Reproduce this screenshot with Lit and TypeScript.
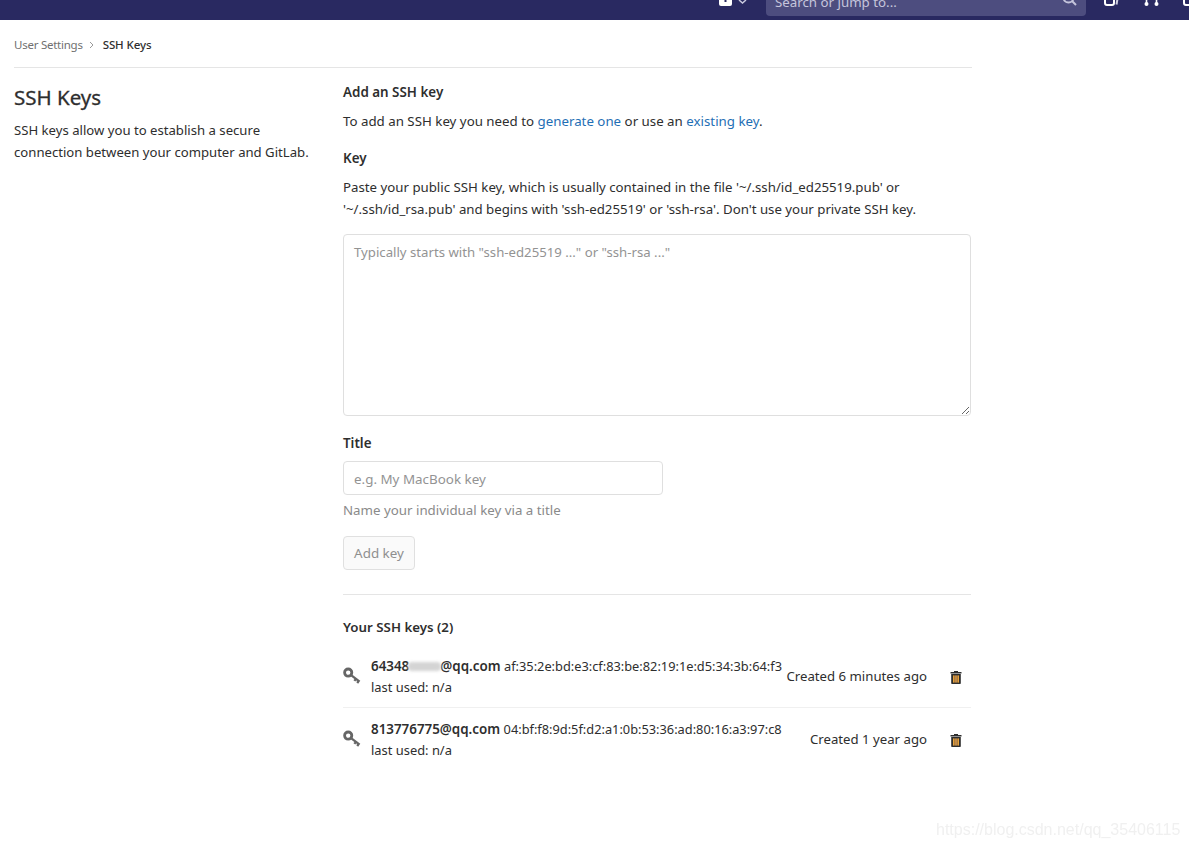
import { LitElement, html, css } from "lit";
import { customElement } from "lit/decorators.js";

const keyIcon = html`<svg class="key" width="18" height="18" viewBox="0 0 18 18" fill="none">
  <circle cx="5.2" cy="5.6" r="3.6" stroke="#666" stroke-width="2.8"/>
  <path d="M8.4 8.4 L16.6 14.6 M12.8 11.8 L11.4 13.8 M15.6 14 L14.2 16" stroke="#666" stroke-width="2.3"/>
</svg>`;

const trashIcon = html`<svg class="trash" width="12" height="13" viewBox="0 0 12 13">
  <path d="M4 1 V0 H8 V1 H11.5 V2.6 H0.5 V1 Z" fill="#2e2e2e"/>
  <path d="M1.2 3 H10.8 V12.2 Q10.8 13 10 13 H2 Q1.2 13 1.2 12.2 Z" fill="#2e2e2e"/>
  <rect x="3" y="4.4" width="1.7" height="7.2" fill="#e9a23b"/>
  <rect x="5.15" y="4.4" width="1.7" height="7.2" fill="#d99a50"/>
  <rect x="7.3" y="4.4" width="1.7" height="7.2" fill="#e9a23b"/>
</svg>`;

@customElement("app-root")
export class AppRoot extends LitElement {
  static styles = css`
    :host {
      display: block;
      width: 1189px;
      height: 848px;
      overflow: hidden;
      position: relative;
      background: #fff;
      font-family: "Noto Sans", "Open Sans", sans-serif;
      font-size: 13.3px;
      line-height: 21px;
      color: #2e2e2e;
    }
    * { box-sizing: border-box; }
    .topbar {
      height: 20px;
      background: #292961;
      position: relative;
      overflow: hidden;
    }
    .plus { position: absolute; left: 718px; top: -9px; }
    .search {
      position: absolute;
      left: 766px;
      top: -16px;
      width: 320px;
      height: 32px;
      border-radius: 4px;
      background: #4d4d7f;
      color: #c5c5dc;
      font-size: 13.3px;
      line-height: 32px;
      padding-left: 9px;
      padding-top: 2px;
    }
    .searchicon { position: absolute; left: 1062px; top: -9px; }
    .ic1 { position: absolute; left: 1104px; top: -9px; }
    .ic2 { position: absolute; left: 1144px; top: -9px; }
    .ic3 { position: absolute; left: 1183px; top: -9px; }

    .page { width: 958px; margin-left: 14px; }
    .crumbs {
      height: 48px;
      border-bottom: 1px solid #e5e5e5;
      display: flex;
      align-items: center;
      padding-top: 2px;
      font-size: 11.5px;
      letter-spacing: -0.25px;
      color: #707070;
    }
    .crumbs .cur { color: #2e2e2e; font-weight: 500; letter-spacing: -0.1px; }
    .crumbs svg { margin: 0 8px 0 6px; }
    .layout { display: grid; grid-template-columns: 329px 628px; }
    .side h2 {
      margin: 13px 0 0;
      font-size: 20.5px;
      line-height: 32px;
      font-weight: 400;
      -webkit-text-stroke: 0.3px #2e2e2e;
      color: #2e2e2e;
    }
    .side p { margin: 6px 0 0; line-height: 22px; font-size: 13.15px; }
    .main { padding-top: 14px; }
    .h5 { font-weight: 600; font-size: 13.4px; line-height: 20px; margin: 0; }
    .intro { margin: 9px 0 0; }
    a { color: #1f6fb5; text-decoration: none; }
    label { display: block; font-weight: 600; line-height: 20px; font-size: 13.4px; }
    .keyl { margin-top: 16px; }
    .hint { margin: 8px 0 0; line-height: 22px; font-size: 13.26px; }
    textarea {
      display: block;
      margin-top: 14px;
      width: 628px;
      height: 182px;
      border: 1px solid #dfdfdf;
      border-radius: 4px;
      padding: 7px 10px;
      font: inherit;
      font-size: 13.2px;
      color: #2e2e2e;
      outline: none;
    }
    textarea::placeholder, input::placeholder { color: #939393; opacity: 1; }
    .titlel { margin-top: 17px; }
    input {
      display: block;
      margin-top: 8px;
      width: 320px;
      height: 34px;
      border: 1px solid #dfdfdf;
      border-radius: 4px;
      padding: 2px 10px 0;
      font: inherit;
      font-size: 13.4px;
      outline: none;
    }
    .help { color: #8a8a8a; margin-top: 5px; }
    button {
      display: block;
      margin-top: 15px;
      height: 34px;
      width: 72px;
      padding: 0;
      background: #fafafa;
      border: 1px solid #e0e0e0;
      border-radius: 4px;
      color: #8f8f8f;
      font: inherit;
      font-size: 13.4px;
    }
    hr { border: 0; border-top: 1px solid #e5e5e5; margin: 24px 0 0; }
    .yours { margin: 22px 0 0; font-weight: 600; line-height: 20px; }
    .rows { margin-top: 8px; }
    .row {
      display: flex;
      height: 63px;
      align-items: flex-start;
      border-bottom: 1px solid #f0f0f0;
      padding-top: 11px;
    }
    .row:last-child { border-bottom: 0; }
    .key { margin-top: 11px; flex: none; }
    .info { margin-left: 10px; white-space: nowrap; flex: none; }
    .info .top { line-height: 21px; }
    .mail { font-weight: 600; font-size: 13.38px; }
    .fp { font-size: 12.8px; }
    .blur {
      display: inline-block;
      width: 33px;
      height: 9px;
      background: #d4d4d4;
      border-radius: 4px;
      filter: blur(1.5px);
      margin: 0 -1px;
    }
    .last { line-height: 21px; font-size: 12.9px; }
    .created { margin-left: auto; margin-top: 10px; white-space: nowrap; font-size: 13.2px; }
    .trash { margin: 15px 9px 0 23px; flex: none; }
    .watermark {
      position: absolute;
      left: 936px;
      top: 818px;
      font-family: "Liberation Sans", Arial, sans-serif;
      font-size: 16px;
      line-height: 24px;
      color: #f0f0f0;
      filter: blur(0.6px);
    }
  `;

  render() {
    return html`
      <div class="topbar">
        <svg class="plus" width="30" height="20" viewBox="0 0 30 20">
          <rect x="1" y="0" width="13" height="15" rx="2" fill="#fff"/>
          <path d="M7.5 5v6M4.5 8h6" stroke="#292961" stroke-width="2"/>
          <path d="M21 9 l3.5 3 l3.5 -3" fill="none" stroke="#c9c9de" stroke-width="1.5"/>
        </svg>
        <div class="search">Search or jump to...</div>
        <svg class="searchicon" width="16" height="16" viewBox="0 0 16 16" fill="none">
          <circle cx="6.5" cy="6.5" r="5" stroke="#c5c5dc" stroke-width="2"/>
          <path d="M10 10 L14 14" stroke="#c5c5dc" stroke-width="2"/>
        </svg>
        <svg class="ic1" width="16" height="16" viewBox="0 0 16 16" fill="none">
          <rect x="1" y="0" width="9" height="14" rx="2" stroke="#fff" stroke-width="2"/>
          <path d="M12.5 13.5 L14.5 2" stroke="#d0d0e0" stroke-width="2"/>
        </svg>
        <svg class="ic2" width="16" height="16" viewBox="0 0 16 16" fill="none">
          <path d="M2.5 0v12M12.5 0v12" stroke="#fff" stroke-width="1.6"/>
          <circle cx="2.5" cy="13" r="2" fill="#fff"/>
          <circle cx="12.5" cy="13" r="2" fill="#fff"/>
        </svg>
        <svg class="ic3" width="6" height="16" viewBox="0 0 6 16" fill="none">
          <rect x="1" y="0" width="14" height="14" rx="2" stroke="#fff" stroke-width="2"/>
        </svg>
      </div>

      <div class="page">
        <div class="crumbs">
          <span>User Settings</span>
          <svg width="6" height="8" viewBox="0 0 6 8" fill="none"><path d="M1 1l3 3-3 3" stroke="#9a9a9a" stroke-width="1"/></svg>
          <span class="cur">SSH Keys</span>
        </div>
        <div class="layout">
          <div class="side">
            <h2>SSH Keys</h2>
            <p>SSH keys allow you to establish a secure<br />connection between your computer and GitLab.</p>
          </div>
          <div class="main">
            <div class="h5">Add an SSH key</div>
            <p class="intro">To add an SSH key you need to <a>generate one</a> or use an <a>existing key</a>.</p>
            <label class="keyl">Key</label>
            <p class="hint">Paste your public SSH key, which is usually contained in the file '~/.ssh/id_ed25519.pub' or<br />'~/.ssh/id_rsa.pub' and begins with 'ssh-ed25519' or 'ssh-rsa'. Don't use your private SSH key.</p>
            <textarea placeholder='Typically starts with "ssh-ed25519 ..." or "ssh-rsa ..."'></textarea>
            <label class="titlel">Title</label>
            <input placeholder="e.g. My MacBook key" />
            <div class="help">Name your individual key via a title</div>
            <button>Add key</button>
            <hr />
            <div class="yours">Your SSH keys (2)</div>
            <div class="rows">
              <div class="row">
                ${keyIcon}
                <div class="info">
                  <div class="top"><span class="mail">64348<span class="blur"></span>@qq.com</span> <span class="fp">af:35:2e:bd:e3:cf:83:be:82:19:1e:d5:34:3b:64:f3</span></div>
                  <div class="last">last used: n/a</div>
                </div>
                <div class="created">Created 6 minutes ago</div>
                ${trashIcon}
              </div>
              <div class="row">
                ${keyIcon}
                <div class="info">
                  <div class="top"><span class="mail">813776775@qq.com</span> <span class="fp">04:bf:f8:9d:5f:d2:a1:0b:53:36:ad:80:16:a3:97:c8</span></div>
                  <div class="last">last used: n/a</div>
                </div>
                <div class="created">Created 1 year ago</div>
                ${trashIcon}
              </div>
            </div>
          </div>
        </div>
      </div>
      <div class="watermark">https://blog.csdn.net/qq_35406115</div>
    `;
  }
}
